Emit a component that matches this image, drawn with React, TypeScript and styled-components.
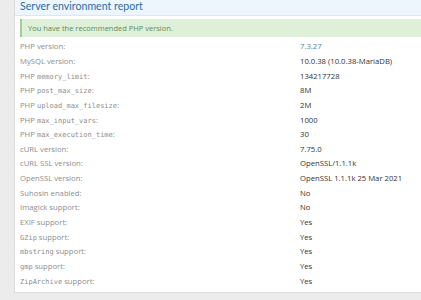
import styled, { createGlobalStyle } from 'styled-components';

const GlobalStyle = createGlobalStyle`
    html, body {
        margin: 0;
        padding: 0;
        background: #ececec;
        overflow: hidden;
    }
    body {
        font-family: 'Open Sans', 'Segoe UI', sans-serif;
    }
`;

const Page = styled.div`
    padding: 0 0 10px 14px;
    width: 407px;
`;
const Block = styled.div`
    background: #fff;
    border: 1px solid #dcdcdc;
    border-top: none;
    border-right: none;
`;
const Header = styled.h2`
    margin: 0;
    height: 15px;
    padding: 0 5px;
    background: #edf5fd;
    border-bottom: 1px solid #dae7f4;
    color: #2b6ea3;
    font-family: Lato, 'Open Sans', sans-serif;
    font-size: 10.6px;
    font-weight: 400;
    line-height: 13px;
`;
const Body = styled.div`
    padding: 3px 0 4px 5px;
`;
const Notice = styled.div`
    height: 18px;
    background: #dff0d9;
    border-left: 2px solid #9ecf96;
    color: #5e8c57;
    font-size: 7.5px;
    line-height: 18px;
    padding-left: 6px;
    margin-bottom: 2px;
`;
const Row = styled.div`
    display: grid;
    grid-template-columns: 280px 1fr;
    height: 14.65px;
    align-items: center;
    font-size: 7.7px;
`;
const Label = styled.div`
    color: #8d8d8d;
    white-space: nowrap;
`;
const Value = styled.div<{ link?: boolean }>`
    color: ${props => (props.link ? '#4a86b8' : '#333333')};
    white-space: nowrap;
`;
const Code = styled.code`
    font-family: 'DejaVu Sans Mono', monospace;
    font-size: 7px;
    color: #8d8d8d;
`;

type Item = { pre?: string; code?: string; post: string; value: string; link?: boolean };

const items: Item[] = [
    { post: 'PHP version:', value: '7.3.27', link: true },
    { post: 'MySQL version:', value: '10.0.38 (10.0.38-MariaDB)' },
    { pre: 'PHP ', code: 'memory_limit', post: ':', value: '134217728' },
    { pre: 'PHP ', code: 'post_max_size', post: ':', value: '8M' },
    { pre: 'PHP ', code: 'upload_max_filesize', post: ':', value: '2M' },
    { pre: 'PHP ', code: 'max_input_vars', post: ':', value: '1000' },
    { pre: 'PHP ', code: 'max_execution_time', post: ':', value: '30' },
    { post: 'cURL version:', value: '7.75.0' },
    { post: 'cURL SSL version:', value: 'OpenSSL/1.1.1k' },
    { post: 'OpenSSL version:', value: 'OpenSSL 1.1.1k 25 Mar 2021' },
    { post: 'Suhosin enabled:', value: 'No' },
    { post: 'Imagick support:', value: 'No' },
    { post: 'EXIF support:', value: 'Yes' },
    { code: 'GZip', post: ' support:', value: 'Yes' },
    { code: 'mbstring', post: ' support:', value: 'Yes' },
    { code: 'gmp', post: ' support:', value: 'Yes' },
    { code: 'ZipArchive', post: ' support:', value: 'Yes' },
];

function App() {
    return (
        <>
            <GlobalStyle />
            <Page>
                <Block>
                    <Header>Server environment report</Header>
                    <Body>
                        <Notice>You have the recommended PHP version.</Notice>
                        {items.map(item => (
                            <Row key={item.post + item.value + (item.code || '')}>
                                <Label>
                                    {item.pre}
                                    {item.code && <Code>{item.code}</Code>}
                                    {item.post}
                                </Label>
                                <Value link={item.link}>{item.value}</Value>
                            </Row>
                        ))}
                    </Body>
                </Block>
            </Page>
        </>
    );
}

export default App;
